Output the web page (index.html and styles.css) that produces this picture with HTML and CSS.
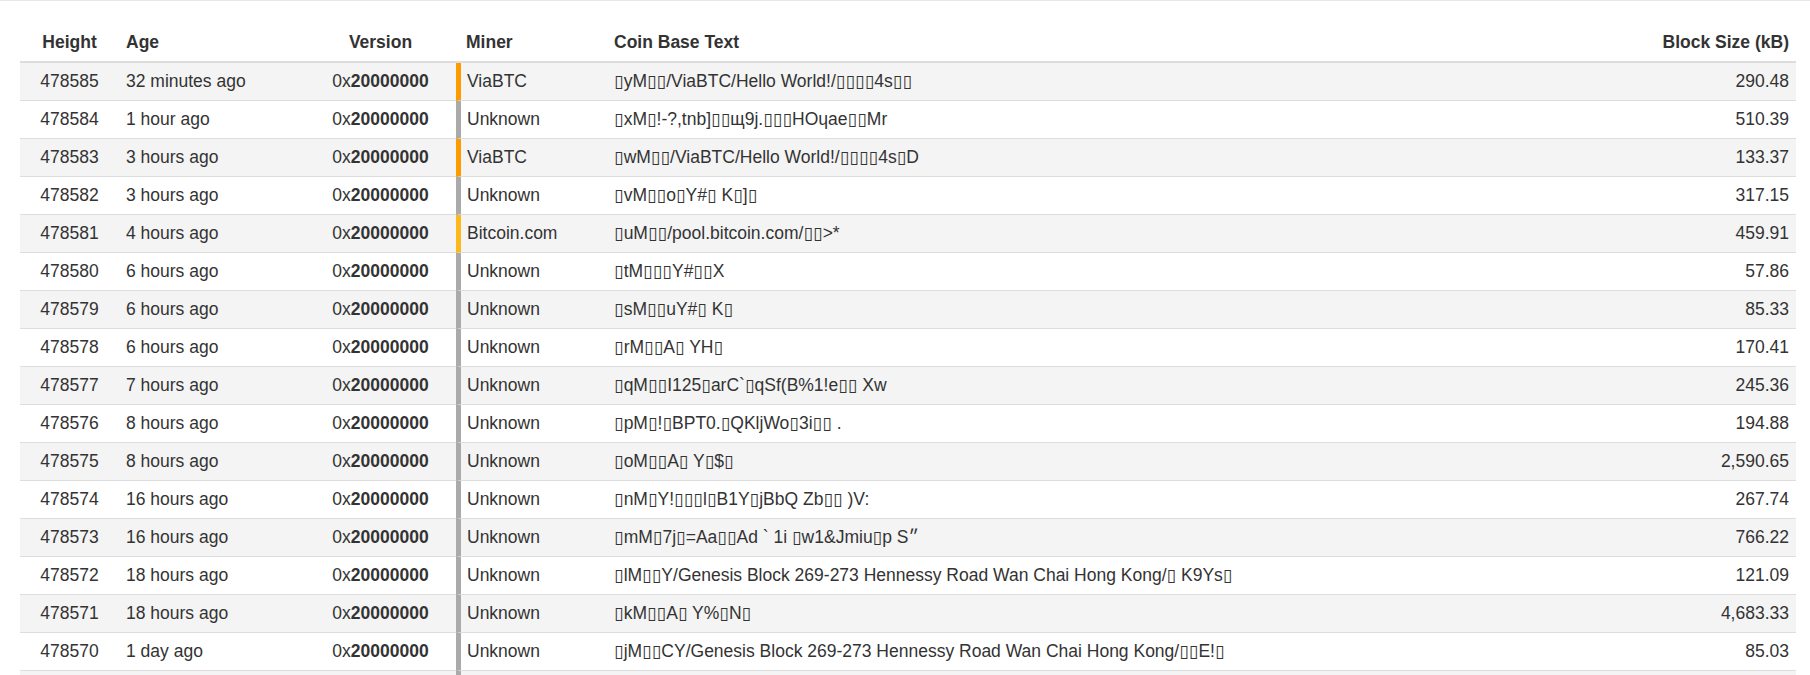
FILE: index.html
```html
<!DOCTYPE html>
<html lang="en">
<head>
<meta charset="utf-8">
<title>Blocks</title>
<link rel="stylesheet" href="styles.css">
</head>
<body>
<div class="topline"></div>
<table class="blocks">
  <colgroup>
    <col class="c-height">
    <col class="c-age">
    <col class="c-version">
    <col class="c-miner">
    <col class="c-coinbase">
    <col class="c-size">
  </colgroup>
  <thead>
    <tr>
      <th class="center">Height</th>
      <th>Age</th>
      <th class="center">Version</th>
      <th class="miner-h">Miner</th>
      <th>Coin Base Text</th>
      <th class="right">Block Size (kB)</th>
    </tr>
  </thead>
  <tbody>
    <tr><td class="center">478585</td><td>32 minutes ago</td><td class="center">0x<b>20000000</b></td><td class="miner m-via">ViaBTC</td><td>▯yM▯▯/ViaBTC/Hello World!/▯▯▯▯4s▯▯</td><td class="right">290.48</td></tr>
    <tr><td class="center">478584</td><td>1 hour ago</td><td class="center">0x<b>20000000</b></td><td class="miner m-unk">Unknown</td><td>▯xM▯!-?,tnb]▯▯щ9j.▯▯▯HOɥae▯▯Mr</td><td class="right">510.39</td></tr>
    <tr><td class="center">478583</td><td>3 hours ago</td><td class="center">0x<b>20000000</b></td><td class="miner m-via">ViaBTC</td><td>▯wM▯▯/ViaBTC/Hello World!/▯▯▯▯4s▯D</td><td class="right">133.37</td></tr>
    <tr><td class="center">478582</td><td>3 hours ago</td><td class="center">0x<b>20000000</b></td><td class="miner m-unk">Unknown</td><td>▯vM▯▯o▯Y#▯ K▯]▯</td><td class="right">317.15</td></tr>
    <tr><td class="center">478581</td><td>4 hours ago</td><td class="center">0x<b>20000000</b></td><td class="miner m-btc">Bitcoin.com</td><td>▯uM▯▯/pool.bitcoin.com/▯▯&gt;*</td><td class="right">459.91</td></tr>
    <tr><td class="center">478580</td><td>6 hours ago</td><td class="center">0x<b>20000000</b></td><td class="miner m-unk">Unknown</td><td>▯tM▯▯▯Y#▯▯X</td><td class="right">57.86</td></tr>
    <tr><td class="center">478579</td><td>6 hours ago</td><td class="center">0x<b>20000000</b></td><td class="miner m-unk">Unknown</td><td>▯sM▯▯uY#▯ K▯</td><td class="right">85.33</td></tr>
    <tr><td class="center">478578</td><td>6 hours ago</td><td class="center">0x<b>20000000</b></td><td class="miner m-unk">Unknown</td><td>▯rM▯▯A▯ YH▯</td><td class="right">170.41</td></tr>
    <tr><td class="center">478577</td><td>7 hours ago</td><td class="center">0x<b>20000000</b></td><td class="miner m-unk">Unknown</td><td>▯qM▯▯I125▯arC`▯qSf(B%1!e▯▯ Xw</td><td class="right">245.36</td></tr>
    <tr><td class="center">478576</td><td>8 hours ago</td><td class="center">0x<b>20000000</b></td><td class="miner m-unk">Unknown</td><td>▯pM▯!▯BPT0.▯QKljWo▯3i▯▯ .</td><td class="right">194.88</td></tr>
    <tr><td class="center">478575</td><td>8 hours ago</td><td class="center">0x<b>20000000</b></td><td class="miner m-unk">Unknown</td><td>▯oM▯▯A▯ Y▯$▯</td><td class="right">2,590.65</td></tr>
    <tr><td class="center">478574</td><td>16 hours ago</td><td class="center">0x<b>20000000</b></td><td class="miner m-unk">Unknown</td><td>▯nM▯Y!▯▯▯l▯B1Y▯jBbQ Zb▯▯ )V:</td><td class="right">267.74</td></tr>
    <tr><td class="center">478573</td><td>16 hours ago</td><td class="center">0x<b>20000000</b></td><td class="miner m-unk">Unknown</td><td>▯mM▯7j▯=Aa▯▯Ad ` 1i ▯w1&amp;Jmiu▯p S״</td><td class="right">766.22</td></tr>
    <tr><td class="center">478572</td><td>18 hours ago</td><td class="center">0x<b>20000000</b></td><td class="miner m-unk">Unknown</td><td>▯lM▯▯Y/Genesis Block 269-273 Hennessy Road Wan Chai Hong Kong/▯ K9Ys▯</td><td class="right">121.09</td></tr>
    <tr><td class="center">478571</td><td>18 hours ago</td><td class="center">0x<b>20000000</b></td><td class="miner m-unk">Unknown</td><td>▯kM▯▯A▯ Y%▯N▯</td><td class="right">4,683.33</td></tr>
    <tr><td class="center">478570</td><td>1 day ago</td><td class="center">0x<b>20000000</b></td><td class="miner m-unk">Unknown</td><td>▯jM▯▯CY/Genesis Block 269-273 Hennessy Road Wan Chai Hong Kong/▯▯E!▯</td><td class="right">85.03</td></tr>
    <tr class="more"><td></td><td></td><td></td><td class="miner m-unk"></td><td></td><td></td></tr>
  </tbody>
</table>
</body>
</html>
```

FILE: styles.css
```css
html, body {
  margin: 0;
  padding: 0;
  background: #ffffff;
}

body {
  font-family: "Liberation Sans", Arial, "DejaVu Sans", sans-serif;
  font-size: 17.5px;
  line-height: 25px;
  color: #333333;
}

.topline {
  border-top: 1px solid #e7e7e7;
}

.blocks {
  margin: 23px 14px 0 20px;
  width: calc(100% - 34px);
  table-layout: fixed;
  border-collapse: separate;
  border-spacing: 0;
}

.c-height { width: 100px; }
.c-age { width: 186px; }
.c-version { width: 150px; }
.c-miner { width: 152px; }
.c-size { width: 200px; }

.blocks th,
.blocks td {
  padding: 6px 7px 6px 6px;
  text-align: left;
  vertical-align: top;
  white-space: nowrap;
  overflow: hidden;
}

.blocks th {
  font-weight: bold;
  border-bottom: 2px solid #dddddd;
}

.blocks td {
  border-bottom: 1px solid #dddddd;
}

.blocks tbody tr:nth-child(odd) td {
  background: #f4f4f4;
}

.blocks tr.more td {
  height: 25px;
}

.blocks b {
  font-weight: bold;
}

.blocks .center { text-align: center; }
.blocks .right { text-align: right; }

.blocks td.miner {
  border-left: 5px solid #aaaaaa;
}

.blocks td.m-via { border-left-color: #ff9900; }
.blocks td.m-btc { border-left-color: #fdb81e; }
.blocks td.m-unk { border-left-color: #aaaaaa; }

.blocks th.miner-h {
  padding-left: 10px;
}
```
